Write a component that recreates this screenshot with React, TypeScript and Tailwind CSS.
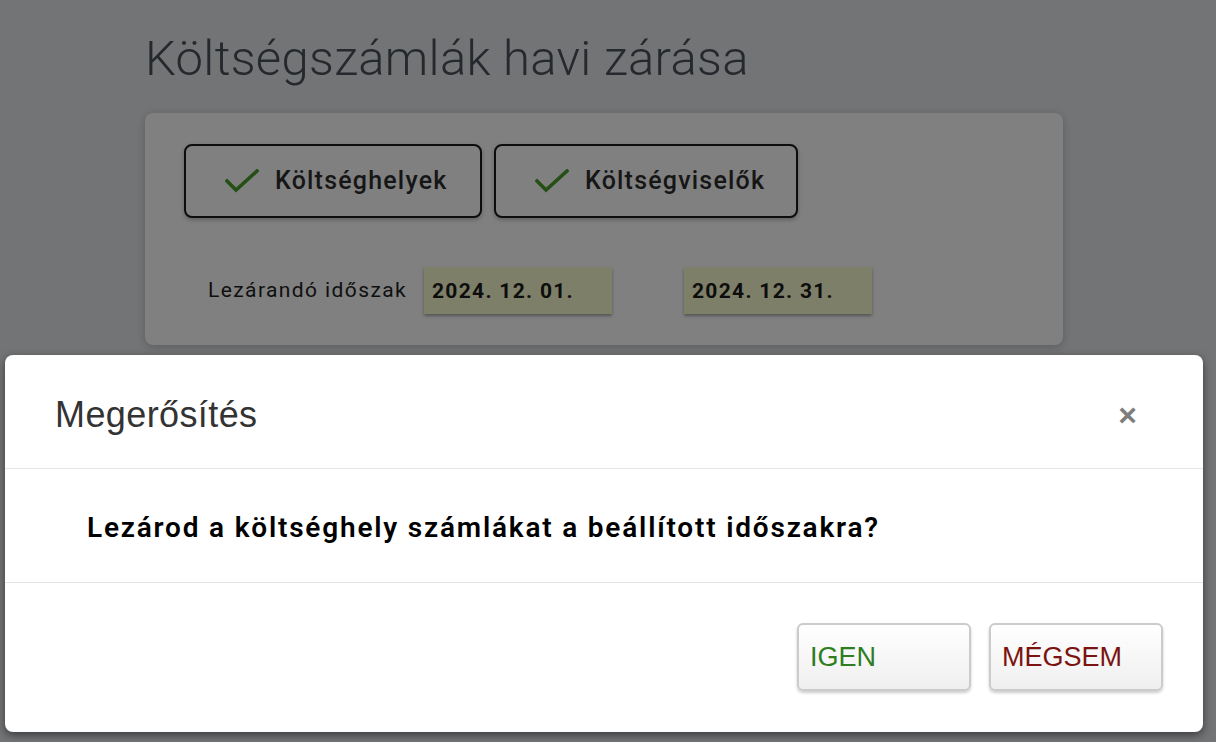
import React from 'react';

const roboto = { fontFamily: 'Roboto, "Noto Sans", sans-serif' };

const CheckIcon = () => (
  <svg width="34" height="24" viewBox="0 0 34 24" fill="none">
    <path d="M2 12 L11 21 L32 2" stroke="#245016" strokeWidth="3.6" strokeLinecap="square" />
  </svg>
);

const ToggleButton = ({ label, width }: { label: string; width: string }) => (
  <button
    className={`flex h-[74px] items-center gap-4 rounded-lg border-2 border-[#0d0d0d] bg-[#808080] pl-[39px] text-[25px] font-medium tracking-[1.2px] text-[#161616] shadow-[0_2px_4px_rgba(0,0,0,0.25)] ${width}`}
  >
    <CheckIcon />
    <span>{label}</span>
  </button>
);

const DateBox = ({ value }: { value: string }) => (
  <div className="flex h-[47px] w-[188px] items-center bg-[#7e7f68] pl-2 pt-[2px] text-[21px] font-bold tracking-[1.3px] text-[#0d0d0d] shadow-[0_2px_3px_rgba(0,0,0,0.35)]">
    {value}
  </div>
);

const App = () => {
  return (
    <div className="relative h-[742px] w-[1216px] overflow-hidden bg-[#737476]" style={roboto}>
      <div className="pl-[145px] pt-[30px]">
        <h1 className="text-[49px] font-light leading-[1.2] tracking-[0.3px] text-[#25282c]">Költségszámlák havi zárása</h1>
        <div className="mt-[24px] h-[232px] w-[918px] rounded-lg bg-[#808080] pl-[39px] pt-[31px] shadow-[0_2px_8px_rgba(0,0,0,0.2)]">
          <div className="flex gap-3">
            <ToggleButton label="Költséghelyek" width="w-[298px]" />
            <ToggleButton label="Költségviselők" width="w-[304px]" />
          </div>
          <div className="mt-[49px] flex items-center">
            <span className="ml-[24px] w-[216px] text-[21px] tracking-[1.4px] text-[#0f0f0f]">Lezárandó időszak</span>
            <DateBox value="2024. 12. 01." />
            <div className="ml-[72px]">
              <DateBox value="2024. 12. 31." />
            </div>
          </div>
        </div>
      </div>

      <div className="absolute left-[5px] top-[355px] flex h-[377px] w-[1198px] flex-col rounded-lg bg-white shadow-[0_3px_9px_rgba(0,0,0,0.5)]">
        <div
          className="flex h-[114px] items-center justify-between border-b border-[#e5e5e5] pl-[50px] pr-[66px] pt-[6px]"
          style={{ fontFamily: '"Liberation Sans", Arial, sans-serif' }}
        >
          <h2 className="text-[36px] tracking-[0.4px] text-[#333]">Megerősítés</h2>
          <button className="text-[32px] font-bold leading-none text-[#7d7d7d]">×</button>
        </div>
        <div className="flex h-[114px] items-center border-b border-[#e5e5e5] pl-[82px] pt-[4px]">
          <p className="text-[28px] font-semibold tracking-[1.8px] text-black">
            Lezárod a költséghely számlákat a beállított időszakra?
          </p>
        </div>
        <div
          className="flex flex-1 items-start justify-end gap-[18px] pr-[40px] pt-[40px]"
          style={{ fontFamily: '"Liberation Sans", Arial, sans-serif' }}
        >
          <button className="h-[68px] w-[174px] rounded-[6px] border-2 border-[#cbcbcb] bg-gradient-to-b from-white to-[#efefef] pl-[11px] text-left text-[27px] text-[#2e7d1f] shadow-[0_2px_3px_rgba(0,0,0,0.2)]">
            IGEN
          </button>
          <button className="h-[68px] w-[174px] rounded-[6px] border-2 border-[#cbcbcb] bg-gradient-to-b from-white to-[#efefef] pl-[11px] text-left text-[27px] text-[#7b1410] shadow-[0_2px_3px_rgba(0,0,0,0.2)]">
            MÉGSEM
          </button>
        </div>
      </div>
    </div>
  );
};

export default App;
